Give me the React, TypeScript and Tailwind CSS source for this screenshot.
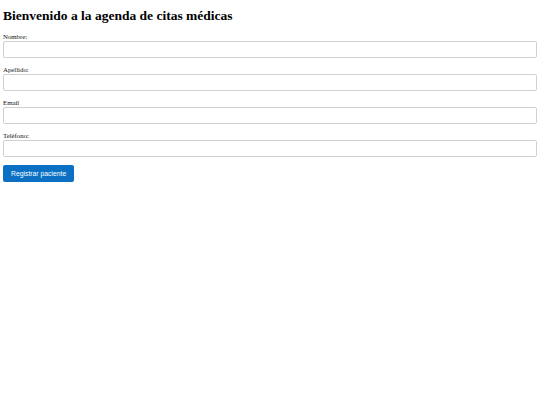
import React from 'react';

const fields = [
  { id: 'nombre', label: 'Nombre:', type: 'text' },
  { id: 'apellido', label: 'Apellido:', type: 'text' },
  { id: 'email', label: 'Email', type: 'email' },
  { id: 'telefono', label: 'Teléfono:', type: 'tel' },
];

export default function App() {
  return (
    <div className="min-h-screen bg-white px-[3px] pt-[7px] text-black [font-family:'Liberation_Serif',serif]">
      <h1 className="text-[13.5px] font-bold leading-[18px]">Bienvenido a la agenda de citas médicas</h1>

      <form className="mt-[8px]" onSubmit={(e) => e.preventDefault()}>
        {fields.map((f) => (
          <div key={f.id} className="mb-[8px]">
            <label htmlFor={f.id} className="block text-[6.8px] font-normal leading-[8px] text-[#111]">
              {f.label}
            </label>
            <input
              id={f.id}
              type={f.type}
              className="block h-[17px] w-full rounded-[2px] border border-[#d0d0d0] bg-white px-1 text-[7px] outline-none"
            />
          </div>
        ))}

        <button
          type="submit"
          className="block h-[17px] rounded-[2px] bg-[#0b70c4] px-[8px] text-[6.8px] leading-[17px] text-white [font-family:'Liberation_Sans',Arial,sans-serif]"
        >
          Registrar paciente
        </button>
      </form>
    </div>
  );
}
